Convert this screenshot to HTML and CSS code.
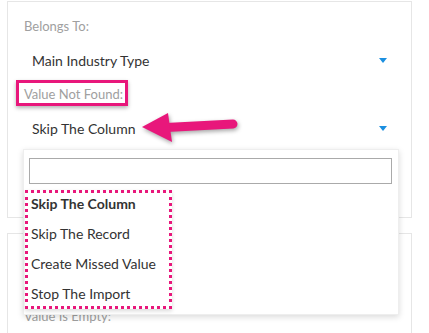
FILE: index.html
```html
<!DOCTYPE html>
<html lang="en">
<head>
    <meta charset="UTF-8">
    <meta name="viewport" content="width=device-width, initial-scale=1.0">
    <title>Import Mapping</title>
    <link rel="stylesheet" href="styles.css">
</head>
<body>

<div class="page">
    <!-- Mapping settings card -->
    <div class="card">
        <div class="field">
            <div class="field-label">Belongs To:</div>
            <div class="select">
                <span>Main Industry Type</span>
                <span class="caret"></span>
            </div>
        </div>
        <div class="field">
            <div class="field-label">Value Not Found:</div>
            <div class="select">
                <span>Skip The Column</span>
                <span class="caret"></span>
            </div>
        </div>
        <div class="field">
            <div class="field-label">No Do Duplicate Check:</div>
            <!-- covered by the open dropdown -->
            <div class="select"></div>
        </div>
    </div>

    <div class="card card-second">
        <!-- covered by the open dropdown -->
        <div class="field field-blank"></div>
        <div class="field">
            <div class="field-label">Value Is Empty:</div>
        </div>
    </div>
</div>

<!-- Open dropdown -->
<div class="dropdown">
    <input type="text" class="dropdown-search">
    <ul class="dropdown-list">
        <li class="selected">Skip The Column</li>
        <li>Skip The Record</li>
        <li>Create Missed Value</li>
        <li>Stop The Import</li>
    </ul>
</div>

<!-- Annotations -->
<div class="mark-box"></div>
<div class="mark-dotted"></div>
<svg class="mark-arrow" width="104" height="40" viewBox="0 0 104 40">
    <line x1="28" y1="19.5" x2="95" y2="16" stroke="#e8177b" stroke-width="9" stroke-linecap="round"/>
    <polygon points="4,19 30,5 34,34" fill="#e8177b"/>
</svg>

</body>
</html>
```

FILE: styles.css
```css
body {
    margin: 0;
    font-family: Lato, "Open Sans", sans-serif;
    background-color: #fff;
    color: #333;
}

.page {
    padding: 1px 17px 0 7px;
}

/* Cards */
.card {
    border: 1px solid #e6e6e6;
    padding: 16px 16px 3px 16px;
}

.card-second {
    margin-top: 15px;
    padding-top: 6px;
    height: 120px;
}

.field {
    margin-bottom: 8px;
}

.field:last-child {
    margin-bottom: 0;
}

.field-blank {
    height: 60px;
}

.field-label {
    font-size: 13px;
    line-height: 16px;
    color: #a0a0a0;
}

.select {
    display: flex;
    justify-content: space-between;
    align-items: center;
    height: 36px;
    margin-top: 8px;
    padding: 0 8px;
    font-size: 14px;
    color: #333;
}

.caret {
    width: 0;
    height: 0;
    border-left: 4px solid transparent;
    border-right: 4px solid transparent;
    border-top: 5px solid #1b8fe0;
}

/* Dropdown */
.dropdown {
    position: absolute;
    left: 23px;
    top: 149px;
    width: 364px;
    height: 150px;
    padding: 8px 5px 6px 5px;
    background-color: #fff;
    border: 1px solid #eee;
    box-shadow: 0 2px 6px rgba(0, 0, 0, 0.15);
}

.dropdown-search {
    display: block;
    box-sizing: border-box;
    width: 363px;
    height: 26px;
    margin: 0 0 5px 0;
    border: 1px solid #aaa;
    border-radius: 0;
    padding: 0 4px;
}

.dropdown-list {
    list-style: none;
    margin: 0;
    padding: 0 0 0 2px;
}

.dropdown-list li {
    height: 30px;
    line-height: 30px;
    font-size: 14px;
    color: #333;
}

.dropdown-list li.selected {
    font-weight: bold;
}

/* Annotations */
.mark-box {
    position: absolute;
    left: 16px;
    top: 80px;
    width: 106px;
    height: 20px;
    border: 3px solid #e8177b;
    box-shadow: 0 2px 4px rgba(0, 0, 0, 0.3);
}

.mark-dotted {
    position: absolute;
    left: 25px;
    top: 190px;
    width: 141px;
    height: 113px;
    border: 3px dotted #e8177b;
    box-shadow: 0 2px 4px rgba(0, 0, 0, 0.15);
}

.mark-arrow {
    position: absolute;
    left: 138px;
    top: 108px;
    filter: drop-shadow(1px 2px 2px rgba(0, 0, 0, 0.35));
}
```
